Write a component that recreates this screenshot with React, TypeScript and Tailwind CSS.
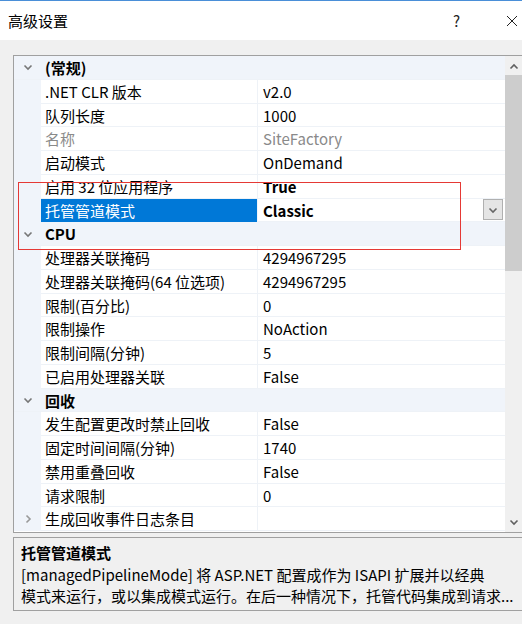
import React from 'react';

type Row =
  | { kind: 'cat'; label: string; open: boolean }
  | { kind: 'prop'; name: string; value: string; dim?: boolean; bold?: boolean; selected?: boolean; expandable?: boolean };

const rows: Row[] = [
  { kind: 'cat', label: '(常规)', open: true },
  { kind: 'prop', name: '.NET CLR 版本', value: 'v2.0' },
  { kind: 'prop', name: '队列长度', value: '1000' },
  { kind: 'prop', name: '名称', value: 'SiteFactory', dim: true },
  { kind: 'prop', name: '启动模式', value: 'OnDemand' },
  { kind: 'prop', name: '启用 32 位应用程序', value: 'True', bold: true },
  { kind: 'prop', name: '托管管道模式', value: 'Classic', bold: true, selected: true },
  { kind: 'cat', label: 'CPU', open: true },
  { kind: 'prop', name: '处理器关联掩码', value: '4294967295' },
  { kind: 'prop', name: '处理器关联掩码(64 位选项)', value: '4294967295' },
  { kind: 'prop', name: '限制(百分比)', value: '0' },
  { kind: 'prop', name: '限制操作', value: 'NoAction' },
  { kind: 'prop', name: '限制间隔(分钟)', value: '5' },
  { kind: 'prop', name: '已启用处理器关联', value: 'False' },
  { kind: 'cat', label: '回收', open: true },
  { kind: 'prop', name: '发生配置更改时禁止回收', value: 'False' },
  { kind: 'prop', name: '固定时间间隔(分钟)', value: '1740' },
  { kind: 'prop', name: '禁用重叠回收', value: 'False' },
  { kind: 'prop', name: '请求限制', value: '0' },
  { kind: 'prop', name: '生成回收事件日志条目', value: '', expandable: true },
];

function Chevron({ dir }: { dir: 'down' | 'right' | 'up' }) {
  const d =
    dir === 'down' ? 'M1.5 3.5 L5 7 L8.5 3.5' : dir === 'up' ? 'M1.5 6.5 L5 3 L8.5 6.5' : 'M3.5 1.5 L7 5 L3.5 8.5';
  return (
    <svg width="10" height="10" viewBox="0 0 10 10" className="block">
      <path d={d} fill="none" stroke="currentColor" strokeWidth="1.6" />
    </svg>
  );
}

export default function App() {
  return (
    <div
      className="relative w-[522px] h-[624px] overflow-hidden bg-[#f0f0f0] text-[15px] text-black"
      style={{ fontFamily: '"Noto Sans CJK SC", "Noto Sans", sans-serif' }}
    >
      {/* title bar */}
      <div className="h-px bg-[#4a8fd8]" />
      <div className="h-[39px] bg-white flex items-center pl-[8px]">
        <span className="text-[15px] leading-none">高级设置</span>
        <span className="ml-auto text-[15px] leading-none mr-[46px] text-[#222]">?</span>
        <svg width="12" height="12" viewBox="0 0 12 12" className="mr-[4px]">
          <path d="M1 1 L11 11 M11 1 L1 11" stroke="#222" strokeWidth="1" />
        </svg>
      </div>

      {/* property grid */}
      <div className="ml-[13px] mt-[15px] h-[478px] border-y border-l border-[#a0a0a0] bg-white flex overflow-hidden">
        <div className="flex-1 flex flex-col">
          {rows.map((r, i) =>
            r.kind === 'cat' ? (
              <div key={i} className="h-[23.75px] shrink-0 flex items-center bg-[#f0f4fa] border-b border-[#eef2f7]">
                <div className="w-[27px] flex justify-center text-[#777] pl-[1px]">
                  <Chevron dir="down" />
                </div>
                <span className="font-bold pl-[4px] pt-[2px]">{r.label}</span>
              </div>
            ) : (
              <div key={i} className="h-[23.75px] shrink-0 flex bg-[#f0f4fa]">
                <div className="w-[27px] flex items-center justify-center text-[#999]">
                  {r.expandable && <Chevron dir="right" />}
                </div>
                <div
                  className={
                    r.selected
                      ? 'w-[217px] flex items-center pl-[4px] pt-[2px] bg-[#0078d7] text-white border-r border-[#f0f4fa]'
                      : 'w-[217px] flex items-center pl-[4px] pt-[2px] bg-white border-b border-r border-[#eef2f7] ' +
                        (r.dim ? 'text-[#8a8a8a]' : '')
                  }
                >
                  <span className="whitespace-nowrap">{r.name}</span>
                </div>
                <div
                  className={
                    'flex-1 flex items-center pl-[5px] bg-white border-b border-[#eef2f7] ' +
                    (r.dim ? 'text-[#8a8a8a] ' : '') +
                    (r.bold ? 'font-bold' : '')
                  }
                >
                  <span className="pt-[2px]">{r.value}</span>
                  {r.selected && (
                    <div className="ml-auto mr-[2px] w-[20px] h-[21px] bg-[#e5e5e5] border border-[#b0b0b0] flex items-center justify-center text-[#666]">
                      <Chevron dir="down" />
                    </div>
                  )}
                </div>
              </div>
            )
          )}
        </div>
        {/* scrollbar */}
        <div className="w-[17px] bg-[#f0f0f0] flex flex-col items-center">
          <div className="h-[17px] w-full flex items-center justify-center text-[#606060] mt-[2px]">
            <Chevron dir="up" />
          </div>
          <div className="w-full h-[196px] bg-[#cdcdcd]" />
          <div className="flex-1" />
          <div className="h-[17px] w-full flex items-center justify-center text-[#606060] mb-[2px]">
            <Chevron dir="down" />
          </div>
        </div>
      </div>

      {/* description */}
      <div className="ml-[13px] mt-[4px] h-[74px] border-y border-l border-[#a0a0a0] bg-[#f0f0f0] pl-[7px] pt-[4px] leading-[21.5px] whitespace-nowrap overflow-hidden">
        <div className="font-bold">托管管道模式</div>
        <div>[managedPipelineMode] 将 ASP.NET 配置成作为 ISAPI 扩展并以经典</div>
        <div>模式来运行，或以集成模式运行。在后一种情况下，托管代码集成到请求...</div>
      </div>

      {/* red annotation box */}
      <div className="absolute left-[18px] top-[182px] w-[443px] h-[68px] border border-[#e53935] pointer-events-none" />
    </div>
  );
}
